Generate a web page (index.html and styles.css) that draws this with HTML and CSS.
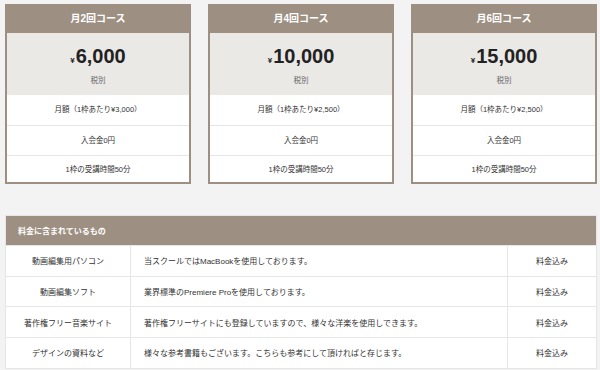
FILE: index.html
```html
<!DOCTYPE html>
<html lang="ja">
<head>
<meta charset="utf-8">
<title>料金プラン</title>
<link rel="stylesheet" href="styles.css">
</head>
<body>
<main class="page">
  <section class="plans">
    <div class="plan">
      <h2 class="plan-title">月2回コース</h2>
      <div class="plan-price">
        <p class="amount"><span class="yen">¥</span>6,000</p>
        <p class="tax">税別</p>
      </div>
      <div class="plan-row">月額（1枠あたり¥3,000）</div>
      <div class="plan-row">入会金0円</div>
      <div class="plan-row">1枠の受講時間50分</div>
    </div>
    <div class="plan">
      <h2 class="plan-title">月4回コース</h2>
      <div class="plan-price">
        <p class="amount"><span class="yen">¥</span>10,000</p>
        <p class="tax">税別</p>
      </div>
      <div class="plan-row">月額（1枠あたり¥2,500）</div>
      <div class="plan-row">入会金0円</div>
      <div class="plan-row">1枠の受講時間50分</div>
    </div>
    <div class="plan">
      <h2 class="plan-title">月6回コース</h2>
      <div class="plan-price">
        <p class="amount"><span class="yen">¥</span>15,000</p>
        <p class="tax">税別</p>
      </div>
      <div class="plan-row">月額（1枠あたり¥2,500）</div>
      <div class="plan-row">入会金0円</div>
      <div class="plan-row">1枠の受講時間50分</div>
    </div>
  </section>

  <table class="included">
    <thead>
      <tr><th colspan="3">料金に含まれているもの</th></tr>
    </thead>
    <tbody>
      <tr>
        <td class="item">動画編集用パソコン</td>
        <td class="desc">当スクールではMacBookを使用しております。</td>
        <td class="status">料金込み</td>
      </tr>
      <tr>
        <td class="item">動画編集ソフト</td>
        <td class="desc">業界標準のPremiere Proを使用しております。</td>
        <td class="status">料金込み</td>
      </tr>
      <tr>
        <td class="item">著作権フリー音楽サイト</td>
        <td class="desc">著作権フリーサイトにも登録していますので、様々な洋楽を使用しできます。</td>
        <td class="status">料金込み</td>
      </tr>
      <tr>
        <td class="item">デザインの資料など</td>
        <td class="desc">様々な参考書籍もございます。こちらも参考にして頂ければと存じます。</td>
        <td class="status">料金込み</td>
      </tr>
    </tbody>
  </table>
</main>
</body>
</html>
```

FILE: styles.css
```css
* {
  box-sizing: border-box;
}

html, body {
  margin: 0;
  background: #f3f3f3;
}

body {
  font-family: "Liberation Sans", "Noto Sans CJK JP", sans-serif;
  color: #333;
}

.page {
  width: 592px;
  margin-left: 5px;
  padding-top: 4px;
}

/* pricing cards */
.plans {
  display: flex;
  gap: 17px;
}

.plan {
  width: 186px;
  background: #fff;
  border: 2px solid #9d8f81;
  border-top: none;
}

.plan-title {
  margin: 0 -2px;
  height: 29px;
  background: #9d8f81;
  color: #fff;
  font-size: 10px;
  font-weight: 700;
  line-height: 29px;
  text-align: center;
}

.plan-price {
  height: 62px;
  background: #ebe9e6;
  text-align: center;
  padding-top: 11px;
}

.amount {
  margin: 0;
  font-size: 20px;
  font-weight: 700;
  line-height: 24px;
  color: #222;
}

.yen {
  font-size: 8px;
  margin-right: 1px;
}

.tax {
  margin: 3px 0 0;
  font-size: 7.5px;
  line-height: 10px;
  color: #666;
}

.plan-row {
  height: 30px;
  border-top: 1px solid #e6e6e6;
  font-size: 7.5px;
  line-height: 29px;
  text-align: center;
}

.plan-row:nth-child(3) {
  border-top: none;
}

.plan-row:last-child {
  height: 27px;
  line-height: 27px;
}

/* included items table */
.included {
  width: 592px;
  margin-top: 31px;
  border-collapse: collapse;
  background: #fff;
  border: 1px solid #e6e6e6;
  font-size: 8px;
}

.included th {
  height: 30px;
  padding: 0 12px;
  background: #9d8f81;
  color: #fff;
  font-weight: 700;
  text-align: left;
}

.included td {
  height: 30.7px;
  padding: 0;
  border: 1px solid #e6e6e6;
}

.item {
  width: 125px;
  text-align: center;
}

.desc {
  padding-left: 13px !important;
}

.status {
  width: 89px;
  text-align: center;
}
```
